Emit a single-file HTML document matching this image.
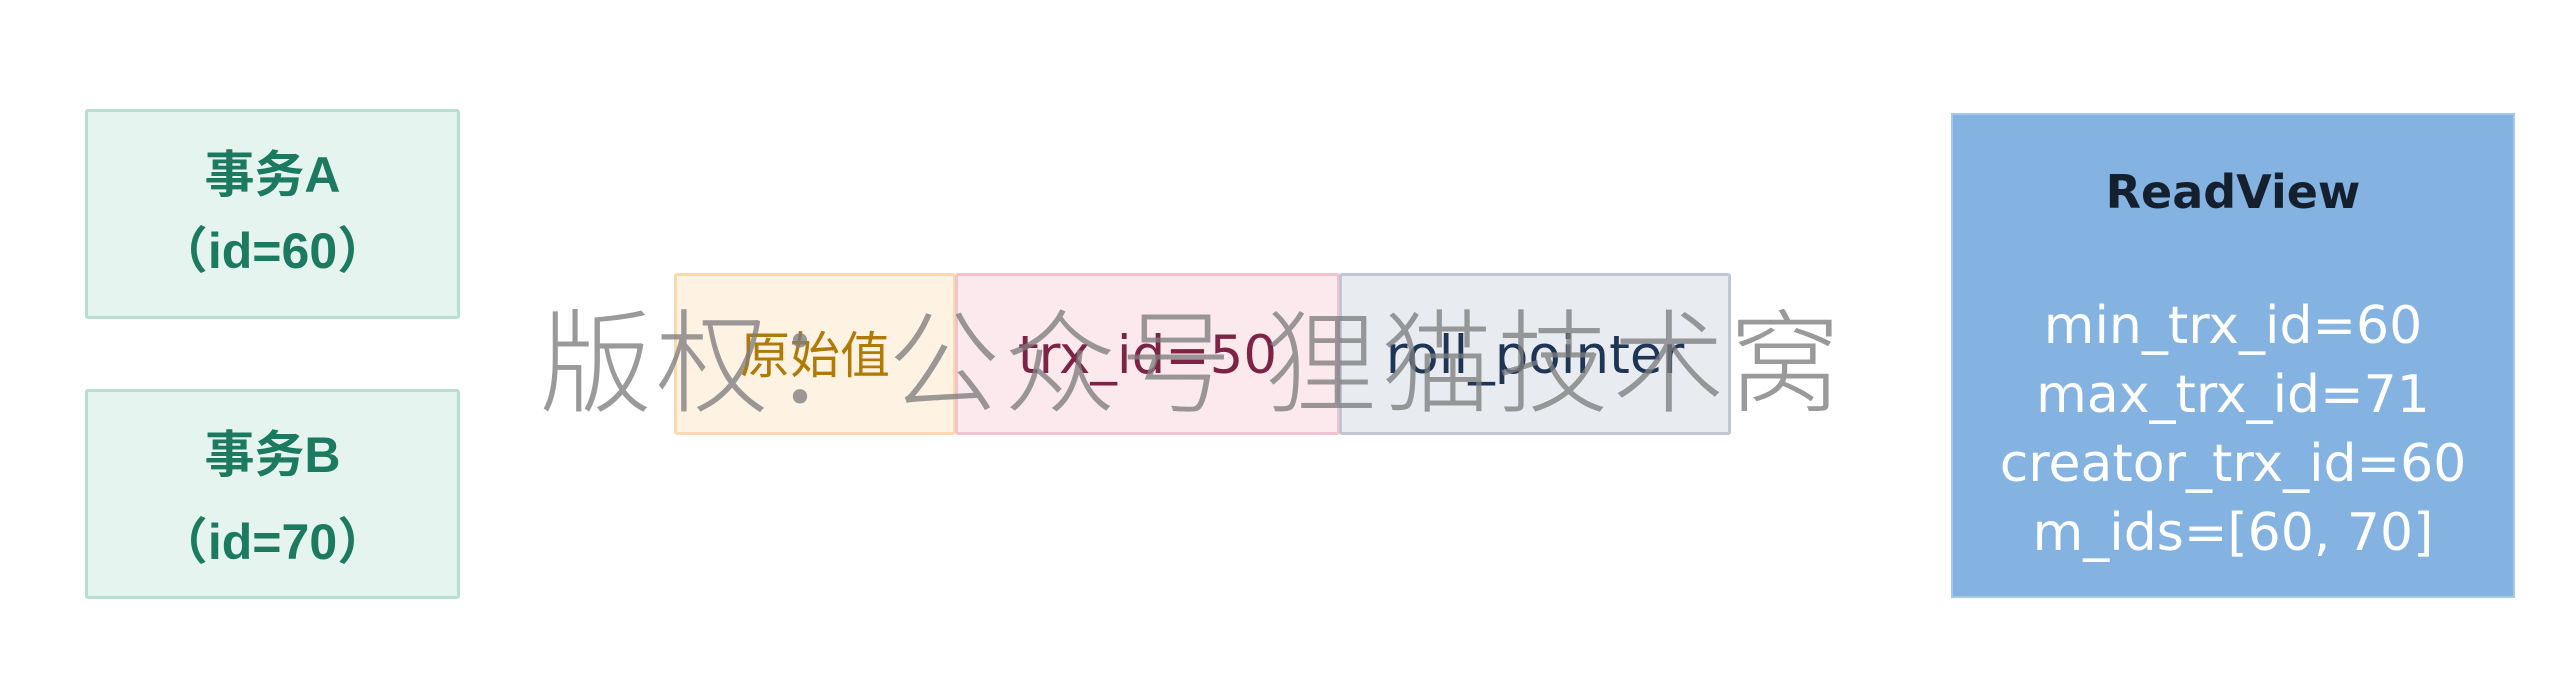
<!DOCTYPE html>
<html><head><meta charset="utf-8"><style>
html,body{margin:0;padding:0;background:#fff;}
body{width:2560px;height:680px;position:relative;overflow:hidden;font-family:"DejaVu Sans","Liberation Sans","Noto Sans CJK SC",sans-serif;}
.b{position:absolute;box-sizing:border-box;}
.tx{position:absolute;left:0;right:0;text-align:center;white-space:nowrap;}
.g{background:#e5f4ee;border:3px solid #b8e0d1;border-radius:3px;color:#1b7a5f;font-family:"Liberation Sans","Noto Sans CJK SC",sans-serif;font-weight:bold;font-size:50px;}
</style></head><body>
<div class="b g" style="left:85px;top:109px;width:375px;height:210px;">
 <div class="tx" style="top:30px;line-height:66px;">事务A</div>
 <div class="tx" style="top:106px;line-height:66px;">（id=60）</div>
</div>
<div class="b g" style="left:85px;top:389px;width:375px;height:210px;">
 <div class="tx" style="top:30px;line-height:66px;">事务B</div>
 <div class="tx" style="top:117px;line-height:66px;">（id=70）</div>
</div>

<div class="b" style="left:674px;top:273px;width:282px;height:162px;background:#fef2e3;border:3px solid #fbd9b0;border-radius:3px;">
 <div class="tx" style="top:48px;line-height:64px;font-size:50px;color:#b07a06;font-family:'Liberation Sans','Noto Sans CJK SC',sans-serif;">原始值</div>
</div>
<div class="b" style="left:955px;top:273px;width:385px;height:162px;background:#fbe9ee;border:3px solid #f1c3cf;border-radius:3px;">
 <div class="tx" style="top:48px;line-height:64px;font-size:53px;color:#7d2346;">trx_id=50</div>
</div>
<div class="b" style="left:1339px;top:273px;width:392px;height:162px;background:#e8ebf0;border:3px solid #bfc7d5;border-radius:3px;">
 <div class="tx" style="top:48px;line-height:64px;font-size:53px;color:#1e3556;">roll_pointer</div>
</div>

<div class="b" style="left:1951px;top:113px;width:564px;height:485px;background:#84b2e1;border:2px solid #a7c8ea;">
 <div class="tx" style="top:47px;line-height:60px;font-size:46px;font-weight:bold;color:#15202e;">ReadView</div>
 <div class="tx" style="top:177px;line-height:69px;font-size:52px;color:#fff;">min_trx_id=60<br>max_trx_id=71<br>creator_trx_id=60<br>m_ids=[60, 70]</div>
</div>

<div style="position:absolute;left:540px;top:290px;line-height:130px;font-size:112px;font-weight:300;letter-spacing:4px;color:rgba(125,125,125,0.78);font-family:'Noto Sans CJK SC',sans-serif;white-space:nowrap;">版权：公众号 狸猫技术窝</div>
</body></html>
